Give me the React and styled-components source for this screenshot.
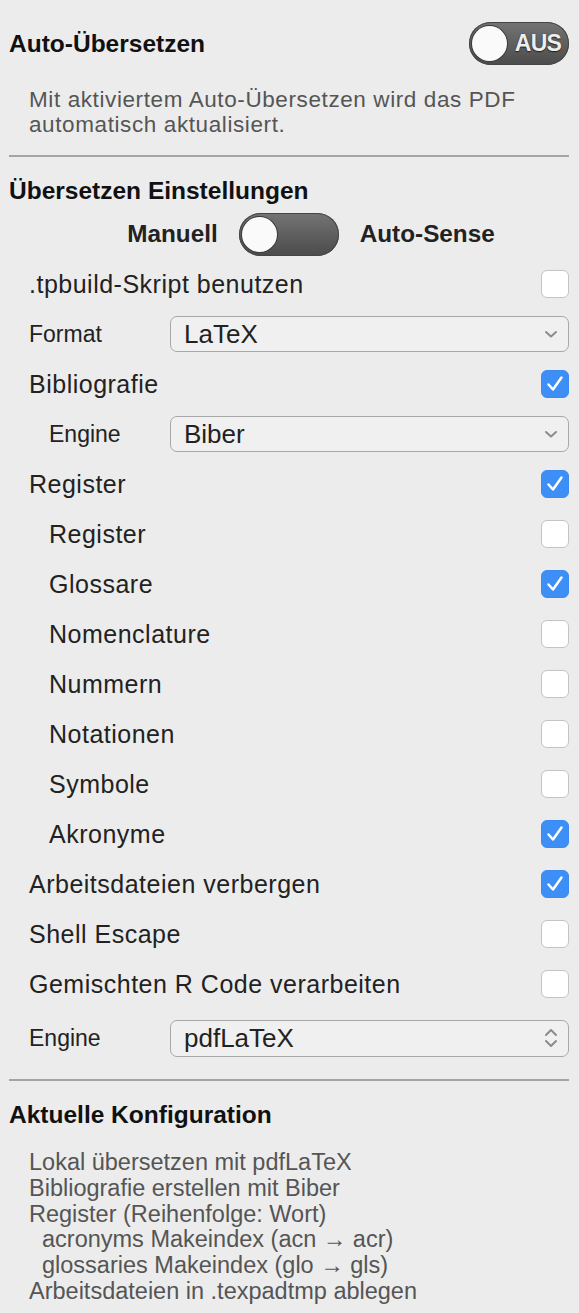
import React from 'react'
import styled, { createGlobalStyle } from 'styled-components'

const Global = createGlobalStyle`
  html, body { margin: 0; padding: 0; background: #ececec; }
  body { font-family: "Liberation Sans", Arial, Helvetica, sans-serif; color: #222; }
`

const Panel = styled.div`
  width: 579px;
  padding: 0 10px 0 9px;
  box-sizing: border-box;
`

const HeaderRow = styled.div`
  display: flex;
  align-items: center;
  justify-content: space-between;
  height: 87px;
`

const Title = styled.h2`
  margin: 0;
  font-size: 24.5px;
  font-weight: 700;
  color: #111;
  line-height: 26px;
`

const Description = styled.p`
  margin: 0 0 0 20px;
  font-size: 22.5px;
  letter-spacing: 0.6px;
  line-height: 25px;
  color: #555;
`

const Divider = styled.hr`
  border: none;
  border-top: 2px solid #a4a4a4;
  margin: ${p => p.$top}px 0 0 0;
`

const SectionTitle = styled(Title)`
  margin-top: ${p => p.$top}px;
`

const Track = styled.div`
  position: relative;
  width: ${p => p.$w}px;
  height: 43px;
  border-radius: 22px;
  background: linear-gradient(#747474, #4b4b4b);
  box-shadow: inset 0 0 0 1px #454545;
  display: flex;
  align-items: center;
  justify-content: flex-end;
  padding-right: 8px;
  box-sizing: border-box;
`

const Knob = styled.div`
  position: absolute;
  left: 3px;
  top: 4px;
  width: 35px;
  height: 35px;
  border-radius: 50%;
  background: #fafafa;
  box-shadow: 0 0 0 1px #3a3a3a;
`

const TrackLabel = styled.span`
  font-size: 23px;
  font-weight: 700;
  color: #eee;
  text-shadow: 0 0 1px #222, 0 1px 1px #222;
  letter-spacing: -0.8px;
`

const ModeRow = styled.div`
  display: flex;
  align-items: center;
  justify-content: center;
  gap: 21px;
  margin-top: 8px;
  height: 44px;
  padding-left: 44px;
`

const ModeLabel = styled.span`
  font-size: 24.3px;
  font-weight: 700;
  color: #222;
`

const Row = styled.div`
  display: flex;
  align-items: center;
  justify-content: space-between;
  height: 50px;
  padding-left: ${p => p.$indent}px;
  margin-top: ${p => p.$top || 0}px;
`

const Label = styled.span`
  font-size: ${p => (p.$small ? 23 : 25)}px;
  letter-spacing: ${p => (p.$small ? 0 : 0.5)}px;
  color: #222;
`

const SelectRow = styled.div`
  display: grid;
  grid-template-columns: ${p => 161 - p.$indent}px 1fr;
  align-items: center;
  height: ${p => p.$h || 50}px;
  padding-left: ${p => p.$indent}px;
  margin-top: ${p => p.$top || 0}px;
`

const SelectBox = styled.div`
  height: ${p => p.$h}px;
  border: 1.5px solid #a8a8a8;
  border-radius: 7px;
  background: #f0f0f0;
  display: flex;
  align-items: center;
  justify-content: space-between;
  padding: 0 10px 0 13px;
  box-sizing: border-box;
`

const SelectText = styled.span`
  font-size: 26px;
  color: #222;
`

const Box = styled.div`
  width: 28px;
  height: 28px;
  border-radius: 6px;
  box-sizing: border-box;
  border: 1px solid ${p => (p.$on ? '#3a8cf4' : '#c4c4c4')};
  background: ${p => (p.$on ? '#3d8ff6' : '#fff')};
  display: flex;
  align-items: center;
  justify-content: center;
`

const Config = styled.div`
  margin: 22px 0 0 20px;
  font-size: 23.5px;
  line-height: 25.8px;
  color: #555;
`

const ConfigLine = styled.div`
  padding-left: ${p => (p.$sub ? 13 : 0)}px;
`

const Toggle = ({ w, label }) => (
  <Track $w={w}>
    <Knob />
    {label && <TrackLabel>{label}</TrackLabel>}
  </Track>
)

const Check = ({ on }) => (
  <Box $on={on}>
    {on && (
      <svg width="20" height="20" viewBox="0 0 20 20">
        <path d="M3.5 10.5 L8 15.5 L16.5 3.5" fill="none" stroke="#fff" strokeWidth="2.5" strokeLinecap="round" strokeLinejoin="round" />
      </svg>
    )}
  </Box>
)

const ChevronDown = () => (
  <svg width="14" height="10" viewBox="0 0 14 10">
    <path d="M2 3 L7 7.5 L12 3" fill="none" stroke="#8c8c8c" strokeWidth="2" strokeLinecap="round" strokeLinejoin="round" />
  </svg>
)

const ChevronUpDown = () => (
  <svg width="14" height="22" viewBox="0 0 14 22">
    <path d="M2 8 L7 3 L12 8" fill="none" stroke="#8c8c8c" strokeWidth="2" strokeLinecap="round" strokeLinejoin="round" />
    <path d="M2 14 L7 19 L12 14" fill="none" stroke="#8c8c8c" strokeWidth="2" strokeLinecap="round" strokeLinejoin="round" />
  </svg>
)

const options = [
  { label: 'Register', indent: 20, on: true },
  { label: 'Register', indent: 40, on: false },
  { label: 'Glossare', indent: 40, on: true },
  { label: 'Nomenclature', indent: 40, on: false },
  { label: 'Nummern', indent: 40, on: false },
  { label: 'Notationen', indent: 40, on: false },
  { label: 'Symbole', indent: 40, on: false },
  { label: 'Akronyme', indent: 40, on: true },
  { label: 'Arbeitsdateien verbergen', indent: 20, on: true },
  { label: 'Shell Escape', indent: 20, on: false },
  { label: 'Gemischten R Code verarbeiten', indent: 20, on: false },
]

const configLines = [
  { text: 'Lokal übersetzen mit pdfLaTeX' },
  { text: 'Bibliografie erstellen mit Biber' },
  { text: 'Register (Reihenfolge: Wort)' },
  { text: 'acronyms Makeindex (acn → acr)', sub: true },
  { text: 'glossaries Makeindex (glo → gls)', sub: true },
  { text: 'Arbeitsdateien in .texpadtmp ablegen' },
]

export default function App() {
  return (
    <>
      <Global />
      <Panel>
        <HeaderRow>
          <Title>Auto-Übersetzen</Title>
          <Toggle w={100} label="AUS" />
        </HeaderRow>
        <Description>
          Mit aktiviertem Auto-Übersetzen wird das PDF
          <br />
          automatisch aktualisiert.
        </Description>
        <Divider $top={18} />

        <SectionTitle $top={21}>Übersetzen Einstellungen</SectionTitle>
        <ModeRow>
          <ModeLabel>Manuell</ModeLabel>
          <Toggle w={100} />
          <ModeLabel>Auto-Sense</ModeLabel>
        </ModeRow>

        <Row $indent={20} $top={3}>
          <Label>.tpbuild-Skript benutzen</Label>
          <Check on={false} />
        </Row>
        <SelectRow $indent={20}>
          <Label $small>Format</Label>
          <SelectBox $h={36}>
            <SelectText>LaTeX</SelectText>
            <ChevronDown />
          </SelectBox>
        </SelectRow>
        <Row $indent={20}>
          <Label>Bibliografie</Label>
          <Check on />
        </Row>
        <SelectRow $indent={40}>
          <Label $small>Engine</Label>
          <SelectBox $h={36}>
            <SelectText>Biber</SelectText>
            <ChevronDown />
          </SelectBox>
        </SelectRow>
        {options.map((o, i) => (
          <Row key={i} $indent={o.indent}>
            <Label>{o.label}</Label>
            <Check on={o.on} />
          </Row>
        ))}
        <SelectRow $indent={20} $top={10} $h={38}>
          <Label $small>Engine</Label>
          <SelectBox $h={37}>
            <SelectText>pdfLaTeX</SelectText>
            <ChevronUpDown />
          </SelectBox>
        </SelectRow>

        <Divider $top={22} />
        <SectionTitle $top={21}>Aktuelle Konfiguration</SectionTitle>
        <Config>
          {configLines.map((l, i) => (
            <ConfigLine key={i} $sub={l.sub}>{l.text}</ConfigLine>
          ))}
        </Config>
      </Panel>
    </>
  )
}
